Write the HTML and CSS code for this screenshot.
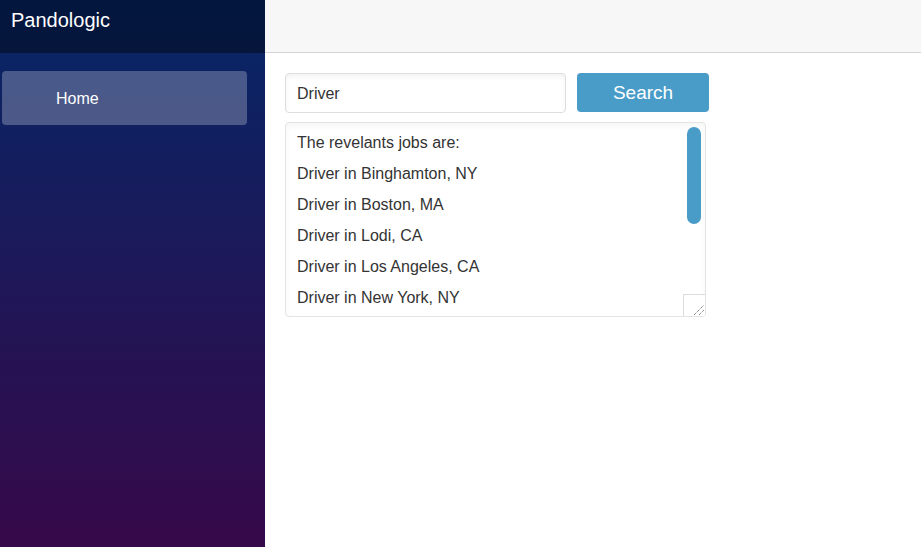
FILE: index.html
```html
<!DOCTYPE html>
<html lang="en">
<head>
<meta charset="utf-8">
<title>Pandologic</title>
<link rel="stylesheet" href="styles.css">
</head>
<body>
  <div class="page">
    <aside class="sidebar">
      <div class="brand-row"><span class="brand">Pandologic</span></div>
      <nav class="nav">
        <a class="nav-link active" href="#">Home</a>
      </nav>
    </aside>
    <main class="main">
      <div class="top-row"></div>
      <div class="content">
        <div class="search-row">
          <input class="search-input" type="text" value="Driver">
          <button class="search-btn" type="button">Search</button>
        </div>
        <div class="results">
          <div class="results-list">
            <div class="results-line">The revelants jobs are:</div>
            <div class="results-line">Driver in Binghamton, NY</div>
            <div class="results-line">Driver in Boston, MA</div>
            <div class="results-line">Driver in Lodi, CA</div>
            <div class="results-line">Driver in Los Angeles, CA</div>
            <div class="results-line">Driver in New York, NY</div>
          </div>
          <div class="scroll-thumb"></div>
          <div class="resize-grip">
            <svg width="21" height="21" viewBox="0 0 21 21">
              <line x1="10" y1="20" x2="20" y2="10" stroke="#555" stroke-width="1" stroke-dasharray="1 1"/>
              <line x1="15" y1="20" x2="20" y2="15" stroke="#555" stroke-width="1" stroke-dasharray="1 1"/>
            </svg>
          </div>
        </div>
      </div>
    </main>
  </div>
</body>
</html>
```
FILE: styles.css
```css
html, body {
  margin: 0;
  padding: 0;
  height: 100%;
}
body {
  font-family: "Liberation Sans", Arial, sans-serif;
  color: #212529;
  background: #fff;
}
.page {
  display: flex;
  min-height: 100vh;
}
.sidebar {
  width: 265px;
  flex: 0 0 265px;
  background-image: linear-gradient(180deg, rgb(5, 39, 103) 0, #3a0647 590px);
}
.brand-row {
  height: 53px;
  background-color: rgba(0, 0, 0, 0.4);
  padding: 9px 0 0 11px;
  box-sizing: border-box;
}
.brand {
  color: #fff;
  font-size: 20px;
  line-height: 23px;
}
.nav {
  padding: 18px 18px 0 2px;
  display: flex;
  flex-direction: column;
}
.nav-link {
  display: flex;
  align-items: center;
  height: 54px;
  box-sizing: border-box;
  padding: 2px 0 0 54px;
  border-radius: 4px;
  color: #fff;
  text-decoration: none;
  font-size: 16px;
}
.nav-link.active {
  background-color: rgba(255, 255, 255, 0.25);
}
.main {
  flex: 1;
  display: flex;
  flex-direction: column;
}
.top-row {
  height: 52px;
  background-color: #f7f7f7;
  border-bottom: 1px solid #d6d5d5;
}
.content {
  padding: 20px 0 0 20px;
}
.search-row {
  display: flex;
  gap: 11px;
  align-items: flex-start;
}
.search-input {
  box-sizing: border-box;
  width: 281px;
  height: 40px;
  border: 1px solid #dedede;
  border-radius: 4px;
  padding: 1px 11px 0;
  font-family: "Liberation Sans", Arial, sans-serif;
  font-size: 16px;
  color: #333;
  box-shadow: inset 0 3px 5px rgba(0, 0, 0, 0.05);
  outline: none;
  margin: 0;
}
.search-btn {
  box-sizing: border-box;
  width: 132px;
  height: 39px;
  border: none;
  border-radius: 4px;
  background-color: #4a9cc8;
  color: #fff;
  font-family: "Liberation Sans", Arial, sans-serif;
  font-size: 19px;
  padding: 0;
  margin: 0;
  cursor: pointer;
}
.results {
  position: relative;
  box-sizing: border-box;
  margin-top: 9px;
  width: 421px;
  height: 195px;
  border: 1px solid #e3e3e3;
  border-radius: 4px;
  overflow: hidden;
  box-shadow: inset 0 4px 6px rgba(0, 0, 0, 0.035);
}
.results-list {
  padding: 4px 0 0 11px;
  font-size: 16px;
  line-height: 31px;
  color: #333;
}
.results-line {
  white-space: nowrap;
}
.scroll-thumb {
  position: absolute;
  top: 4px;
  right: 4px;
  width: 14px;
  height: 97px;
  border-radius: 7px;
  background-color: #4a9cc8;
}
.resize-grip {
  position: absolute;
  right: 0;
  bottom: 0;
  width: 21px;
  height: 21px;
  border-left: 1px solid #dcdcdc;
  border-top: 1px solid #dcdcdc;
  background: #fff;
  display: flex;
}
```
